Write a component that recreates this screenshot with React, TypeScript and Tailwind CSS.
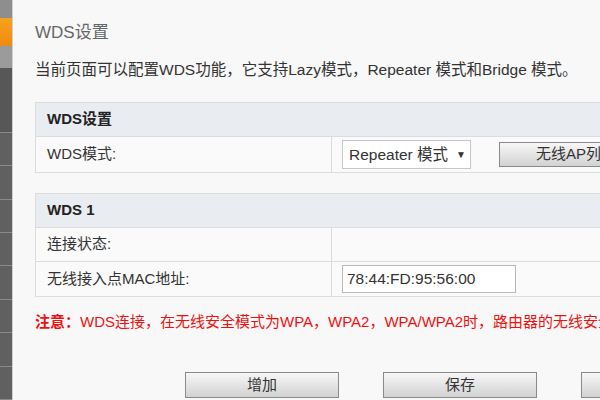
import React from "react";

const font = { fontFamily: '"Liberation Sans", "Noto Sans CJK SC", sans-serif' };

function SideItem({ cls }: { cls: string }) {
  return <div className={cls} />;
}

export default function App() {
  return (
    <div className="w-[600px] h-[400px] overflow-hidden flex bg-[#f8f8f8]" style={font}>
      {/* sidebar */}
      <div className="w-[13px] shrink-0 flex flex-col border-r border-[#d0d0d0]">
        <SideItem cls="h-[20px] bg-[#8e8e8e]" />
        <SideItem cls="h-[32px] bg-gradient-to-b from-[#f7a21c] to-[#ef8a10]" />
        <SideItem cls="h-[25px] bg-[#9b9b9b]" />
        <SideItem cls="h-[73px] bg-[#575757] border-b border-[#8a8a8a]" />
        {[0, 1, 2, 3, 4, 5, 6, 7].map((i) => (
          <SideItem key={i} cls="h-[33.4px] shrink-0 bg-[#606060] border-b border-[#8a8a8a]" />
        ))}
      </div>

      {/* main */}
      <div className="flex-1 pl-[22px] pt-[22px] flex flex-col">
        <div className="text-[17px] leading-[22px] text-[#666]">WDS设置</div>
        <div className="mt-[16px] text-[15.5px] leading-[20px] text-[#333] whitespace-nowrap">
          当前页面可以配置WDS功能，它支持Lazy模式，Repeater 模式和Bridge 模式。
        </div>

        {/* table 1 */}
        <div className="mt-[22px] w-[640px] border border-[#dcdcdc] text-[15px] text-[#333]">
          <div className="h-[34px] bg-[#e9ecf1] border-b border-[#dcdcdc] flex items-center pl-[11px] font-bold text-[#222]">
            WDS设置
          </div>
          <div className="h-[35px] bg-[#fafafa] flex">
            <div className="w-[296px] border-r border-[#dcdcdc] flex items-center pl-[11px]">WDS模式:</div>
            <div className="flex items-center pl-[10px]">
              <div className="w-[129px] h-[29px] border border-[#c6c6c6] bg-white flex items-center pl-[6px] text-[15.5px] text-[#333]">
                Repeater 模式
                <span className="ml-[8px] text-[10px]">▼</span>
              </div>
              <div className="ml-[28px] w-[154px] h-[25px] border border-[#8a8a8a] bg-gradient-to-b from-[#f7f7f7] to-[#d2d2d2] flex items-center justify-center text-[15px] text-[#333]">
                无线AP列表
              </div>
            </div>
          </div>
        </div>

        {/* table 2 */}
        <div className="mt-[20px] w-[640px] border border-[#dcdcdc] text-[15px] text-[#333]">
          <div className="h-[34px] bg-[#e9ecf1] border-b border-[#dcdcdc] flex items-center pl-[11px] font-bold text-[#222]">
            WDS 1
          </div>
          <div className="h-[34px] bg-[#fafafa] border-b border-[#dcdcdc] flex">
            <div className="w-[296px] border-r border-[#dcdcdc] flex items-center pl-[11px]">连接状态:</div>
            <div />
          </div>
          <div className="h-[34px] bg-[#fafafa] flex">
            <div className="w-[296px] border-r border-[#dcdcdc] flex items-center pl-[11px]">无线接入点MAC地址:</div>
            <div className="flex items-center pl-[10px]">
              <div className="w-[174px] h-[28px] border border-[#b8b8b8] bg-white flex items-center pl-[4px] text-[15.5px] text-[#333]">
                78:44:FD:95:56:00
              </div>
            </div>
          </div>
        </div>

        {/* note */}
        <div className="mt-[15px] text-[15px] leading-[20px] text-[#ee1111] whitespace-nowrap">
          <span className="font-bold">注意：</span>WDS连接，在无线安全模式为WPA，WPA2，WPA/WPA2时，路由器的无线安全设置需要与对端一致。
        </div>

        {/* buttons */}
        <div className="mt-[40px] pl-[150px] flex gap-[44px]">
          {["增加", "保存", "删除"].map((t) => (
            <div
              key={t}
              className="shrink-0 w-[154px] h-[26px] border border-[#8a8a8a] bg-gradient-to-b from-[#f7f7f7] to-[#d2d2d2] flex items-center justify-center text-[15px] text-[#333]"
            >
              {t}
            </div>
          ))}
        </div>
      </div>
    </div>
  );
}
